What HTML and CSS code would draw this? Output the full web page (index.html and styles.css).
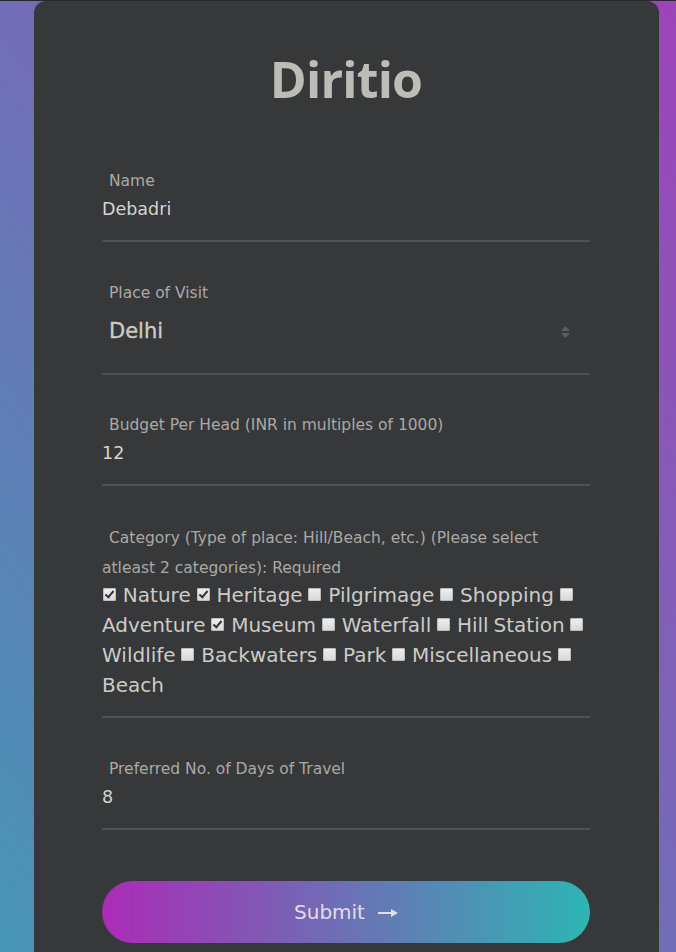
FILE: index.html
```html
<!DOCTYPE html>
<html lang="en">
<head>
<meta charset="utf-8">
<title>Diritio</title>
<link rel="stylesheet" href="styles.css">
</head>
<body>
<main class="card">
  <h1 class="title">Diritio</h1>
  <form class="form">
    <div class="field">
      <label class="label" for="name">Name</label>
      <input class="input" id="name" type="text" value="Debadri">
    </div>
    <div class="field field-select">
      <label class="label" for="place">Place of Visit</label>
      <div class="select-wrap">
        <select class="select" id="place"><option>Delhi</option></select>
        <svg class="select-arrows" width="11" height="14" viewBox="0 0 11 14"><path d="M1 6 L5.5 1 L10 6 Z M1 8 L5.5 13 L10 8 Z" fill="#5c5d5f"/></svg>
      </div>
    </div>
    <div class="field">
      <label class="label" for="budget">Budget Per Head (INR in multiples of 1000)</label>
      <input class="input" id="budget" type="text" value="12">
    </div>
    <div class="field field-cat">
      <p class="label label-cat">Category (Type of place: Hill/Beach, etc.) (Please select atleast 2 categories): Required</p>
      <div class="checks"><input class="check" type="checkbox" checked> Nature <input class="check" type="checkbox" checked> Heritage <input class="check" type="checkbox"> Pilgrimage <input class="check" type="checkbox"> Shopping <input class="check" type="checkbox"> Adventure <input class="check" type="checkbox" checked> Museum <input class="check" type="checkbox"> Waterfall <input class="check" type="checkbox"> Hill Station <input class="check" type="checkbox"> Wildlife <input class="check" type="checkbox"> Backwaters <input class="check" type="checkbox"> Park <input class="check" type="checkbox"> Miscellaneous <input class="check" type="checkbox"> Beach</div>
    </div>
    <div class="field field-last">
      <label class="label" for="days">Preferred No. of Days of Travel</label>
      <input class="input" id="days" type="text" value="8">
    </div>
    <button class="submit" type="button">Submit <svg class="submit-arrow" width="20" height="10" viewBox="0 0 20 10"><rect x="0" y="4" width="14" height="2" fill="currentColor"/><path d="M13 1 L20 5 L13 9 Z" fill="currentColor"/></svg></button>
  </form>
</main>
</body>
</html>
```
FILE: styles.css
```css
html {
  height: 100%;
}

body {
  margin: 0;
  min-height: 100%;
  box-sizing: border-box;
  border-top: 1px solid #29292d;
  background: linear-gradient(to top right, #4796b5, #9d44b9);
  font-family: "DejaVu Sans", sans-serif;
  overflow: hidden;
}

.card {
  box-sizing: border-box;
  width: 625px;
  margin-left: 34px;
  padding: 48px 69px 9px 68px;
  background: #37383a;
  border-radius: 12px 12px 0 0;
}

.title {
  margin: 0 0 61px;
  font-family: "Open Sans", sans-serif;
  font-weight: 700;
  font-size: 50px;
  line-height: 60px;
  letter-spacing: -0.8px;
  text-align: center;
  color: #bdbcb7;
}

.form {
  display: flex;
  flex-direction: column;
}

.field {
  padding-bottom: 20px;
  margin-bottom: 40px;
  border-bottom: 2px solid #505153;
}

.field-select {
  padding-bottom: 27px;
  margin-bottom: 39px;
}

.field-cat {
  padding-bottom: 16px;
}

.field-last {
  margin-bottom: 51px;
}

.label {
  display: block;
  margin: 0;
  text-indent: 7px;
  font-size: 15.5px;
  line-height: 22px;
  color: #aaa9a5;
}

.label-cat {
  margin-top: -3px;
  line-height: 30px;
}

.input {
  display: block;
  box-sizing: border-box;
  width: 100%;
  height: 22px;
  margin-top: 6px;
  padding: 0;
  border: 0;
  outline: none;
  background: transparent;
  font-family: "DejaVu Sans", sans-serif;
  font-size: 17.5px;
  color: #d5d3cf;
}

.select-wrap {
  position: relative;
  margin-top: 12px;
}

.select {
  display: block;
  box-sizing: border-box;
  width: 100%;
  height: 30px;
  padding: 0 0 0 7px;
  border: 0;
  outline: none;
  appearance: none;
  -webkit-appearance: none;
  background: transparent;
  font-family: "DejaVu Sans", sans-serif;
  font-size: 21px;
  color: #cdcbc7;
  -webkit-text-stroke: 0.35px #cdcbc7;
}

.select-arrows {
  position: absolute;
  right: 19px;
  top: 9px;
}

.checks {
  margin-top: -3px;
  font-size: 20px;
  line-height: 30px;
  word-spacing: -1.5px;
  color: #cdcbc7;
}

.check {
  appearance: none;
  -webkit-appearance: none;
  position: relative;
  display: inline-block;
  box-sizing: border-box;
  width: 13px;
  height: 13px;
  margin: 0 2px 1px 1px;
  border-radius: 2px;
  background: linear-gradient(#f0f0f0, #d6d6d6);
  box-shadow: inset 0 0 0 1px #bcbcbc;
  vertical-align: baseline;
}

.check:checked::before {
  content: "";
  position: absolute;
  left: 4px;
  top: 1px;
  width: 3px;
  height: 7px;
  border: solid #333436;
  border-width: 0 2px 2px 0;
  transform: rotate(40deg);
}

.submit {
  display: flex;
  align-items: center;
  justify-content: center;
  gap: 13px;
  width: 100%;
  height: 62px;
  padding: 0;
  border: 0;
  border-radius: 31px;
  background: linear-gradient(to right, #ab2bb6, #2db5b4);
  font-family: "DejaVu Sans", sans-serif;
  font-size: 20px;
  color: #e2dcea;
}

.submit-arrow {
  margin-top: 1px;
}
```
